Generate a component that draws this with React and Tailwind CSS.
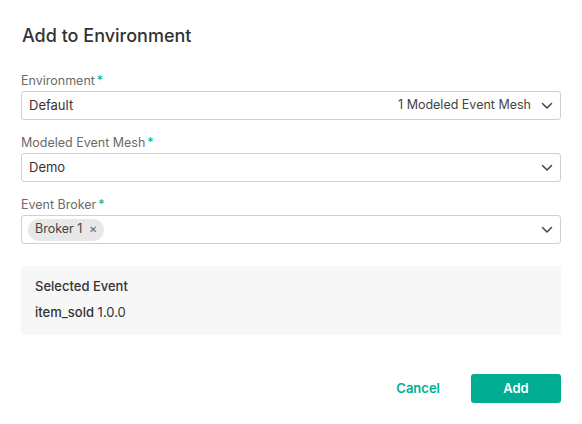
import React from "react";

const Chevron = () => (
  <svg width="12" height="8" viewBox="0 0 12 8" fill="none" className="shrink-0">
    <path d="M1.5 1.5L6 6L10.5 1.5" stroke="#444" strokeWidth="1.5" strokeLinecap="round" strokeLinejoin="round" />
  </svg>
);

const Label = ({ children }) => (
  <div className="text-[12.5px] leading-[16px] text-[#6b6b6b] mb-[2px]">
    {children}
    <span className="text-[#00ad93] ml-[2px]">*</span>
  </div>
);

export default function App() {
  return (
    <div className="w-[582px] h-[424px] bg-white text-[#333]" style={{ fontFamily: "Inter, 'Noto Sans', sans-serif" }}>
      <div className="px-[21px] pt-[25px]">
        <h1 className="text-[18px] leading-[22px] font-medium text-[#333] pl-[1px]">Add to Environment</h1>
        <div className="mt-[26px]">
          <Label>Environment</Label>
          <div className="h-[29px] border border-[#d0d0d0] rounded-[3px] flex items-center px-[7px] text-[13px]">
            <span className="flex-1">Default</span>
            <span className="text-[12.5px] text-[#444] mr-[10px]">1 Modeled Event Mesh</span>
            <Chevron />
          </div>
        </div>
        <div className="mt-[15px]">
          <Label>Modeled Event Mesh</Label>
          <div className="h-[29px] border border-[#d0d0d0] rounded-[3px] flex items-center px-[7px] text-[13px]">
            <span className="flex-1">Demo</span>
            <Chevron />
          </div>
        </div>
        <div className="mt-[15px]">
          <Label>Event Broker</Label>
          <div className="h-[29px] border border-[#d0d0d0] rounded-[3px] flex items-center pl-[6px] pr-[7px] text-[13px]">
            <div className="flex-1 flex">
              <span className="bg-[#e8e8e8] rounded-full h-[22px] flex items-center pl-[7px] pr-[7px] text-[12.5px] text-[#444]">
                Broker 1
                <span className="ml-[7px] text-[10px] text-[#666]">✕</span>
              </span>
            </div>
            <Chevron />
          </div>
        </div>
        <div className="mt-[22px] bg-[#f7f7f7] rounded-[3px] h-[69px] px-[14px] pt-[12px] text-[13px]">
          <div className="font-medium leading-[16px]">Selected Event</div>
          <div className="mt-[10px] leading-[16px]">
            <span className="font-medium">item_sold</span> 1.0.0
          </div>
        </div>
        <div className="mt-[39px] flex justify-end items-center">
          <button className="text-[13px] font-semibold text-[#00ad93] mr-[31px]">Cancel</button>
          <button className="w-[90px] h-[29px] rounded-[3px] bg-[#00ad93] text-white text-[13px] font-semibold">Add</button>
        </div>
      </div>
    </div>
  );
}
